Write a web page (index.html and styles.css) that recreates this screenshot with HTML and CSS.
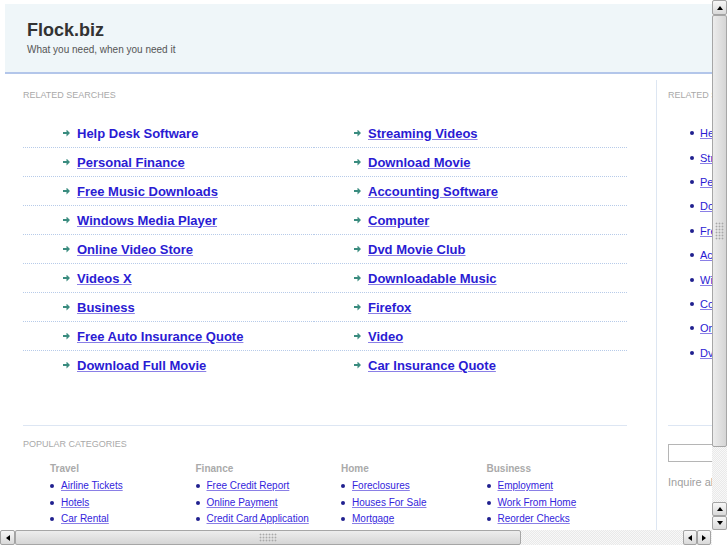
FILE: index.html
```html
<!DOCTYPE html>
<html>
<head>
<meta charset="UTF-8">
<title>Flock.biz</title>
<link rel="stylesheet" href="styles.css">
</head>
<body>
<div class="window">
    <div class="viewport">
        <div class="page">
            <div class="header">
                <h1 class="site-name">Flock.biz</h1>
                <p class="site-tagline">What you need, when you need it</p>
            </div>
            <div class="layout">
                <div class="main">
                    <h2 class="section-title">Related Searches</h2>
                    <ul class="search-list">
                        <li><a href="#" class="active">Help Desk Software</a></li>
                        <li><a href="#">Streaming Videos</a></li>
                        <li><a href="#">Personal Finance</a></li>
                        <li><a href="#">Download Movie</a></li>
                        <li><a href="#">Free Music Downloads</a></li>
                        <li><a href="#">Accounting Software</a></li>
                        <li><a href="#">Windows Media Player</a></li>
                        <li><a href="#">Computer</a></li>
                        <li><a href="#">Online Video Store</a></li>
                        <li><a href="#">Dvd Movie Club</a></li>
                        <li><a href="#">Videos X</a></li>
                        <li><a href="#">Downloadable Music</a></li>
                        <li><a href="#">Business</a></li>
                        <li><a href="#">Firefox</a></li>
                        <li><a href="#">Free Auto Insurance Quote</a></li>
                        <li><a href="#">Video</a></li>
                        <li><a href="#">Download Full Movie</a></li>
                        <li><a href="#">Car Insurance Quote</a></li>
                    </ul>
                    <div class="popular">
                        <h2 class="section-title">Popular Categories</h2>
                        <div class="category-grid">
                            <div class="category">
                                <h3>Travel</h3>
                                <ul>
                                    <li><a href="#">Airline Tickets</a></li>
                                    <li><a href="#">Hotels</a></li>
                                    <li><a href="#">Car Rental</a></li>
                                </ul>
                            </div>
                            <div class="category">
                                <h3>Finance</h3>
                                <ul>
                                    <li><a href="#">Free Credit Report</a></li>
                                    <li><a href="#">Online Payment</a></li>
                                    <li><a href="#">Credit Card Application</a></li>
                                </ul>
                            </div>
                            <div class="category">
                                <h3>Home</h3>
                                <ul>
                                    <li><a href="#">Foreclosures</a></li>
                                    <li><a href="#">Houses For Sale</a></li>
                                    <li><a href="#">Mortgage</a></li>
                                </ul>
                            </div>
                            <div class="category">
                                <h3>Business</h3>
                                <ul>
                                    <li><a href="#">Employment</a></li>
                                    <li><a href="#">Work From Home</a></li>
                                    <li><a href="#">Reorder Checks</a></li>
                                </ul>
                            </div>
                        </div>
                    </div>
                </div>
                <div class="side">
                    <h2 class="section-title">Related Searches</h2>
                    <ul class="side-list">
                        <li><a href="#">Help Desk Software</a></li>
                        <li><a href="#">Streaming Videos</a></li>
                        <li><a href="#">Personal Finance</a></li>
                        <li><a href="#">Download Movie</a></li>
                        <li><a href="#">Free Music Downloads</a></li>
                        <li><a href="#">Accounting Software</a></li>
                        <li><a href="#">Windows Media Player</a></li>
                        <li><a href="#">Computer</a></li>
                        <li><a href="#">Online Video Store</a></li>
                        <li><a href="#">Dvd Movie Club</a></li>
                    </ul>
                    <div class="side-search">
                        <input type="text" class="search-input">
                        <p class="inquire">Inquire about this domain</p>
                    </div>
                </div>
            </div>
        </div>
    </div>
    <div class="vscroll">
        <div class="sb-btn up top"></div>
        <div class="vthumb"><span class="grip"></span></div>
        <div class="sb-track"></div>
        <div class="sb-btn up"></div>
        <div class="sb-btn down"></div>
    </div>
    <div class="hscroll">
        <div class="sb-btn left"></div>
        <div class="hthumb"><span class="grip"></span></div>
        <div class="sb-track"></div>
        <div class="sb-btn left"></div>
        <div class="sb-btn right"></div>
    </div>
    <div class="corner"></div>
</div>
</body>
</html>
```

FILE: styles.css
```css
* { padding: 0; margin: 0; }
html, body {
    width: 100%;
    height: 100%;
}
body {
    overflow: hidden;
    background: #fff;
    font-family: "Liberation Sans", Arial, sans-serif;
}
a {
    color: #2a1bd3;
    text-decoration-color: #8a7fe6;
}
.window {
    display: grid;
    grid-template-columns: 712px 15px;
    grid-template-rows: 530px 15px;
    width: 727px;
    height: 545px;
}
.viewport {
    overflow: hidden;
}
.page {
    width: 1000px;
    padding: 4px 0 0 5px;
}

/* header */
.header {
    padding: 15px 0 16px 22px;
    background: #eff6f9;
    border-bottom: 2px solid #b3c6ea;
}
.site-name {
    font-size: 18px;
    line-height: 22px;
    color: #333;
}
.site-tagline {
    margin-top: 2px;
    font-size: 10px;
    line-height: 13px;
    color: #555;
}

/* columns */
.layout {
    display: flex;
    margin-top: 6px;
    min-height: 460px;
}
.main {
    flex: none;
    width: 651px;
    padding: 10px 0 0 18px;
    box-sizing: border-box;
}
.section-title {
    font-size: 9px;
    line-height: 11px;
    font-weight: normal;
    color: #a9a9a9;
    text-transform: uppercase;
    white-space: nowrap;
}
.search-list {
    list-style: none;
    display: grid;
    grid-template-columns: 291px 313px;
    margin-top: 18px;
}
.search-list li {
    display: flex;
    align-items: center;
    gap: 7px;
    height: 28px;
    padding-left: 40px;
    border-bottom: 1px dotted #b7cbe9;
}
.search-list li:nth-last-child(-n+2) {
    border-bottom: 0;
}
.search-list li::before {
    content: "";
    width: 7px;
    height: 7px;
    background: #3a8c7f;
    clip-path: polygon(0 35%, 50% 35%, 50% 0, 100% 50%, 50% 100%, 50% 65%, 0 65%);
}
.search-list a {
    font-size: 13px;
    line-height: 15px;
    font-weight: bold;
}
.search-list a.active {
    text-decoration: none;
}

.popular {
    width: 604px;
    margin-top: 46px;
    padding-top: 13px;
    border-top: 1px solid #dde6f3;
}
.category-grid {
    display: grid;
    grid-template-columns: repeat(4, 145.5px);
    padding-left: 27px;
    margin-top: 12px;
}
.category h3 {
    font-size: 10px;
    line-height: 14px;
    color: #aaa;
}
.category ul {
    list-style: none;
    margin-top: 2px;
}
.category li {
    display: flex;
    align-items: center;
    gap: 7px;
    font-size: 10px;
    line-height: 16.5px;
    white-space: nowrap;
}
.category li::before,
.side-list li::before {
    content: "";
    flex: none;
    width: 4px;
    height: 4px;
    border-radius: 50%;
    background: #20208f;
}
.category a {
    color: #3324dc;
}

/* right column */
.side {
    width: 300px;
    padding: 10px 0 0 11px;
    border-left: 1px solid #dde6f2;
}
.side-list {
    list-style: none;
    margin-top: 20px;
    padding-left: 22px;
}
.side-list li {
    display: flex;
    align-items: center;
    gap: 6px;
    height: 24.4px;
    font-size: 11px;
    white-space: nowrap;
}
.side-search {
    width: 240px;
    margin-top: 60px;
    padding-top: 18px;
    border-top: 1px solid #dde6f3;
}
.search-input {
    display: block;
    width: 170px;
    height: 18px;
    box-sizing: border-box;
    border: 1px solid #b5b5b5;
}
.inquire {
    margin-top: 13px;
    font-size: 11px;
    line-height: 14px;
    color: #a0a0a0;
    white-space: nowrap;
}

/* scrollbars */
.vscroll,
.hscroll {
    display: flex;
    background: repeating-conic-gradient(#e9e9e9 0 25%, #f8f8f8 0 50%) 0 0 / 2px 2px;
}
.vscroll {
    flex-direction: column;
}
.hscroll {
    padding-right: 1px;
}
.sb-track {
    flex: 1;
}
.sb-btn {
    flex: none;
    display: flex;
    align-items: center;
    justify-content: center;
    width: 15px;
    height: 14px;
    box-sizing: border-box;
    border: 1px solid #a3a3a3;
    border-radius: 2px;
    background: linear-gradient(#f7f7f7, #d9d9d9);
}
.sb-btn.top {
    height: 15px;
}
.hscroll .sb-btn {
    width: 14px;
    height: 15px;
}
.hscroll .sb-btn:first-child {
    width: 15px;
}
.sb-btn::before {
    content: "";
    border: 3px solid transparent;
}
.sb-btn.up::before { border-bottom: 4px solid #000; border-top: 0; }
.sb-btn.down::before { border-top: 4px solid #000; border-bottom: 0; }
.sb-btn.left::before { border-right: 4px solid #000; border-left: 0; }
.sb-btn.right::before { border-left: 4px solid #000; border-right: 0; }
.vthumb,
.hthumb {
    flex: none;
    display: flex;
    align-items: center;
    justify-content: center;
    box-sizing: border-box;
    border: 1px solid #a6a6a6;
    border-radius: 2px;
}
.vthumb {
    height: 432px;
    background: linear-gradient(to right, #ececec, #d5d5d5);
}
.hthumb {
    width: 506px;
    background: linear-gradient(#ededed, #d6d6d6);
}
.grip {
    background: radial-gradient(circle, #a8a8a8 0.8px, transparent 1.1px) 0 0 / 3px 3px;
}
.vthumb .grip {
    width: 9px;
    height: 18px;
}
.hthumb .grip {
    width: 18px;
    height: 9px;
}
.corner {
    background: #fff;
}
```
